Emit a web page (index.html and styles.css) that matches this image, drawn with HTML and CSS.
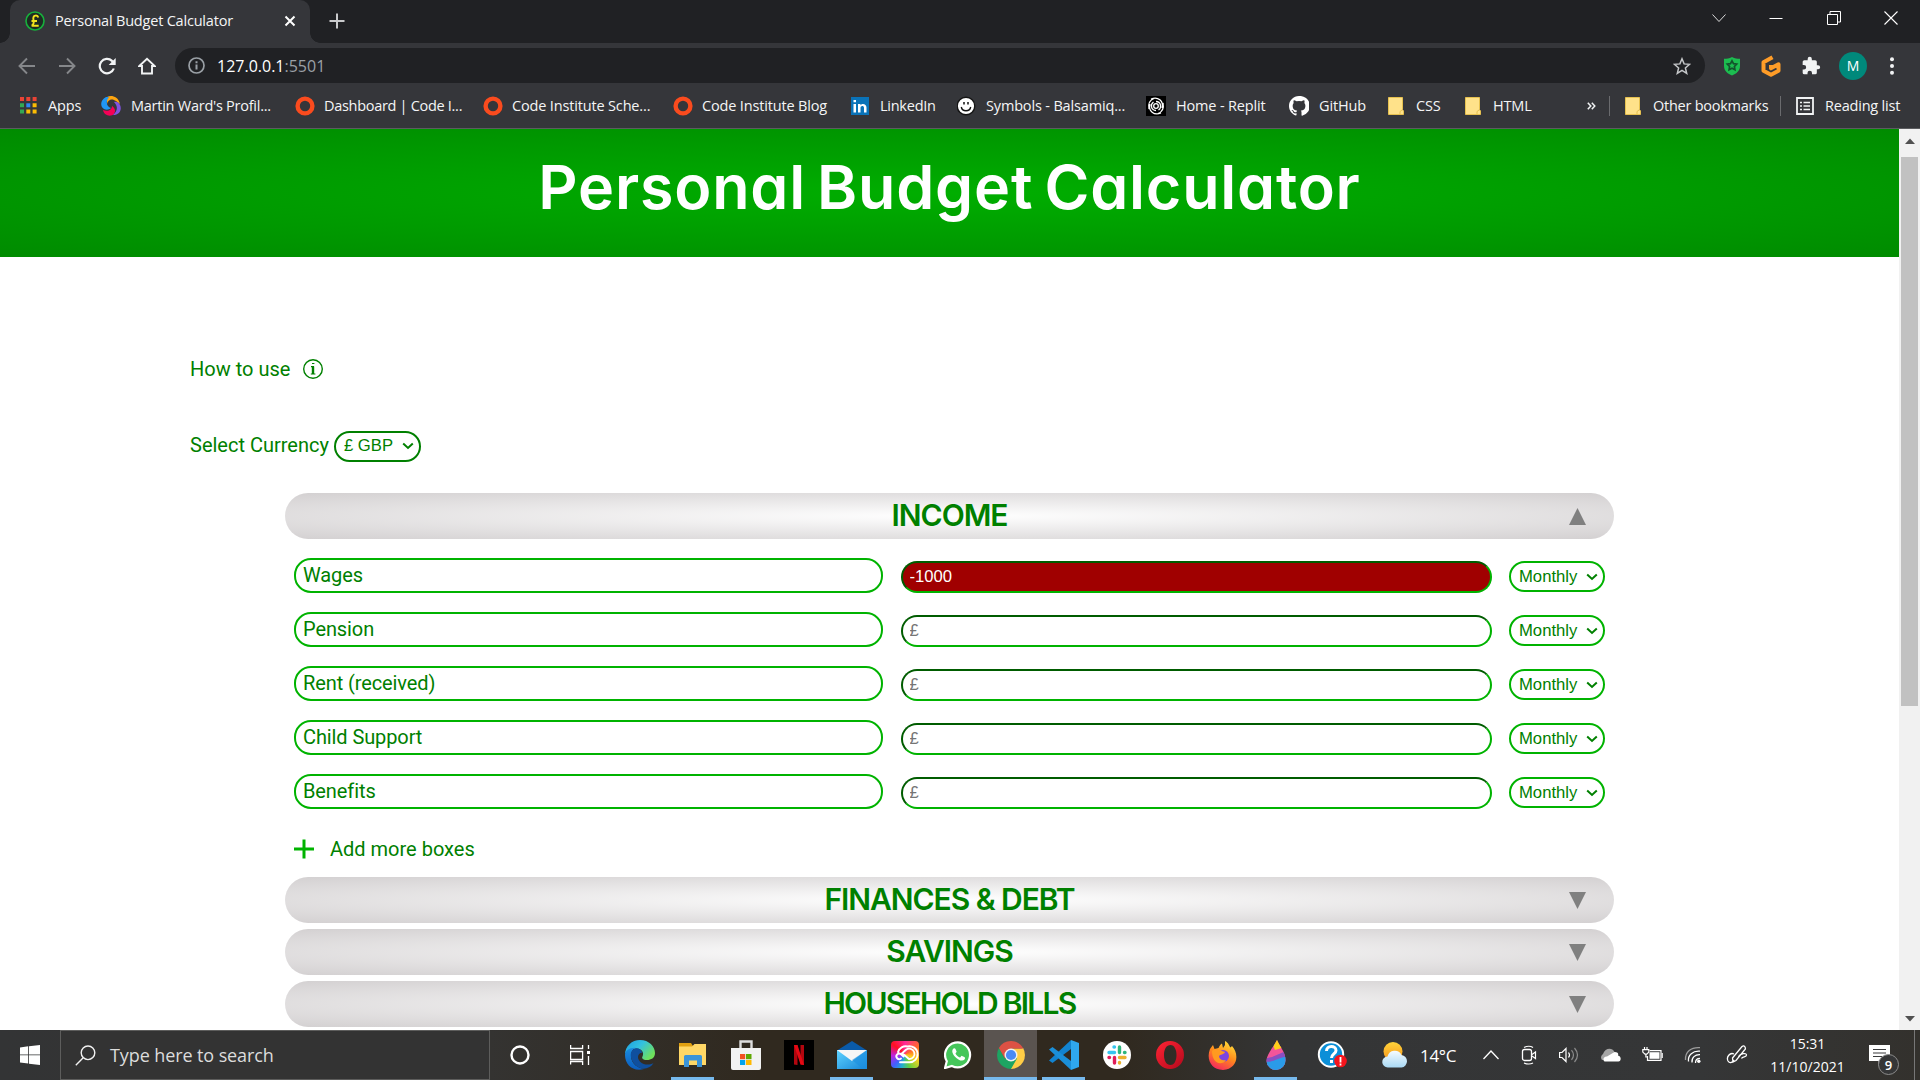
FILE: index.html
```html
<!DOCTYPE html>
<html lang="en">
<head>
<meta charset="utf-8">
<title>Personal Budget Calculator</title>
<link rel="stylesheet" href="styles.css">
</head>
<body>
<svg width="0" height="0" class="defs">
  <defs>
    <symbol id="ring" viewBox="0 0 20 20"><circle cx="10" cy="10" r="7.4" fill="none" stroke="#fa4b1e" stroke-width="4.4"/></symbol>
    <symbol id="folder" viewBox="0 0 16 18"><path d="M.5.5h14v12l1 1.500v3.500H.5z" fill="#ffe28a" stroke="#e6c14f"/><path d="M12 17.500v-3l2-1.500" fill="none" stroke="#e6c14f"/></symbol>
    <symbol id="chev" viewBox="0 0 12 8"><path d="M1.200 1.500 6 6l4.800-4.500" fill="none" stroke="green" stroke-width="2"/></symbol>
    <linearGradient id="edgeA" x1="0" y1="0" x2="1" y2=".6"><stop offset="0" stop-color="#1b9de2"/><stop offset=".5" stop-color="#33c1e0"/><stop offset="1" stop-color="#6fe05a"/></linearGradient>
    <linearGradient id="edgeB" x1="0" y1="0" x2="0" y2="1"><stop offset="0" stop-color="#1a8ce0"/><stop offset="1" stop-color="#0b5cbd"/></linearGradient>
    <linearGradient id="mailG" x1="0" y1="0" x2="1" y2="1"><stop offset="0" stop-color="#5fd3ff"/><stop offset="1" stop-color="#1786d8"/></linearGradient>
    <linearGradient id="ffG" x1=".8" y1="0" x2=".3" y2="1"><stop offset="0" stop-color="#ffe23a"/><stop offset=".5" stop-color="#ff8a1c"/><stop offset="1" stop-color="#f5265e"/></linearGradient>
    <linearGradient id="opG" x1="0" y1="0" x2="1" y2="1"><stop offset="0" stop-color="#ff2434"/><stop offset="1" stop-color="#b3091c"/></linearGradient>
    <linearGradient id="sunG" x1="0" y1="0" x2="0" y2="1"><stop offset="0" stop-color="#ffd43a"/><stop offset="1" stop-color="#f7941d"/></linearGradient>
    <linearGradient id="cloudG" x1="0" y1="0" x2="0" y2="1"><stop offset="0" stop-color="#f5fbff"/><stop offset="1" stop-color="#a9d9f5"/></linearGradient>
    <clipPath id="drop"><path d="M14 0c3 7 8.500 12 8.500 20a9.500 9.500 0 0 1-19 1C3.500 14 10 8 14 0z"/></clipPath>
  </defs>
</svg>

<header class="browser">
  <div class="tabstrip">
    <div class="tab">
      <svg class="favicon" width="20" height="20" viewBox="0 0 20 20"><circle cx="10" cy="10" r="9" fill="#1e2b22" stroke="#17b03c" stroke-width="1.600"/><path d="M13.300 6.600C12.500 3.600 8.300 4 8.300 7.200c0 2 .8 3 .3 5-.2 1.100-.8 2-1.900 2.500h7M6.500 10h5.500" fill="none" stroke="#f2e21c" stroke-width="1.900"/></svg>
      <span class="tab-title">Personal Budget Calculator</span>
      <svg class="tab-close" width="12" height="12" viewBox="0 0 12 12"><path d="m1.500 1.500 9 9m0-9-9 9" stroke="#fff" stroke-width="2"/></svg>
    </div>
    <svg class="newtab" width="16" height="16" viewBox="0 0 16 16"><path d="M8 .5v15M.5 8h15" stroke="#c9cacc" stroke-width="2"/></svg>
    <div class="window-controls">
      <svg width="14" height="14" viewBox="0 0 14 14"><path d="m.5 3.500 6.500 7 6.500-7" fill="none" stroke="#ddd"/></svg>
      <svg width="14" height="14" viewBox="0 0 14 14"><path d="M.5 7.500h13" stroke="#fff"/></svg>
      <svg width="14" height="14" viewBox="0 0 14 14"><path d="M.5 3.500h10v10h-10zM3 3V.5h10.500V11H11" fill="none" stroke="#fff"/></svg>
      <svg width="14" height="14" viewBox="0 0 14 14"><path d="m.5.5 13 13m0-13-13 13" stroke="#fff" stroke-width="1.100"/></svg>
    </div>
  </div>
  <div class="toolbar">
    <div class="nav">
      <svg width="18" height="18" viewBox="0 0 18 18"><path d="M17 9H2M9 1.500 1.500 9 9 16.500" fill="none" stroke="#85878a" stroke-width="1.900"/></svg>
      <svg width="18" height="18" viewBox="0 0 18 18"><path d="M1 9h15M9 1.500 16.500 9 9 16.500" fill="none" stroke="#85878a" stroke-width="1.900"/></svg>
      <svg width="18" height="18" viewBox="0 0 18 18"><path d="M15.800 11.500A7.200 7.200 0 1 1 14 3.900l1.700 1.800" fill="none" stroke="#f1f3f4" stroke-width="2.200"/><path d="M17.700 1v7h-7z" fill="#f1f3f4"/></svg>
      <svg width="18" height="18" viewBox="0 0 18 18"><path d="M1.300 9 9 1.800 16.700 9H14v7.500H4V9z" fill="none" stroke="#f1f3f4" stroke-width="1.900"/></svg>
    </div>
    <div class="omnibox">
      <svg width="17" height="17" viewBox="0 0 17 17"><circle cx="8.500" cy="8.500" r="7.500" fill="none" stroke="#9aa0a6" stroke-width="1.700"/><path d="M8.500 7.500v5M8.500 4.300v1.900" stroke="#9aa0a6" stroke-width="2"/></svg>
      <span class="host">127.0.0.1</span><span class="port">:5501</span>
      <svg class="star" width="18" height="18" viewBox="0 0 18 18"><path d="m9 1.800 2.100 5.100 5.500.4-4.200 3.600 1.300 5.400L9 13.400l-4.700 2.900 1.300-5.400L1.400 7.300l5.500-.4z" fill="none" stroke="#c4c6c8" stroke-width="1.500"/></svg>
    </div>
    <div class="extensions">
      <svg width="18" height="20" viewBox="0 0 18 20"><path d="M9 1c3 1.500 5 1.700 8 1.700V10c0 5-4 8-8 9.500C5 18 1 15 1 10V2.700C4 2.700 6 2.500 9 1z" fill="#1cbd50"/><path d="m9 4.800 1.500 2.900 3.200.5-2.300 2.300.5 3.300L9 12.300l-2.900 1.500.5-3.300-2.300-2.300 3.200-.5z" fill="none" stroke="#13522c" stroke-width="1.700"/></svg>
      <svg width="20" height="22" viewBox="0 0 20 22"><path d="M11.500 2.200 2.500 7.300v8.400l7.500 4.100 7.500-4.100V9.300L10 13.300V10" fill="none" stroke="#ff9d28" stroke-width="4" stroke-linejoin="round"/></svg>
      <svg width="20" height="20" viewBox="0 0 24 24"><path d="M20.500 11H19V7a2 2 0 0 0-2-2h-4V3.500a2.500 2.500 0 0 0-5 0V5H4a2 2 0 0 0-2 2v3.800h1.500a2.700 2.700 0 0 1 0 5.400H2V20a2 2 0 0 0 2 2h3.800v-1.500a2.700 2.700 0 0 1 5.400 0V22H17a2 2 0 0 0 2-2v-4h1.500a2.500 2.500 0 0 0 0-5z" fill="#f1f3f4"/></svg>
      <span class="avatar">M</span>
      <svg width="6" height="18" viewBox="0 0 6 18"><circle cx="3" cy="2.300" r="2" fill="#f1f3f4"/><circle cx="3" cy="9" r="2" fill="#f1f3f4"/><circle cx="3" cy="15.700" r="2" fill="#f1f3f4"/></svg>
    </div>
  </div>
  <div class="bookmarks">
    <div class="bm w81"><svg width="17" height="17" viewBox="0 0 17 17"><path d="M0 0h4v4H0zM6.300 0h4v4h-4zM12.600 0h4v4h-4z" fill="#ea4335"/><path d="M0 6.300h4v4H0zM0 12.600h4v4H0z" fill="#34a853"/><path d="M6.300 6.300h4v4h-4z" fill="#2f86f5"/><path d="M12.600 6.300h4v4h-4zM6.300 12.600h4v4h-4zM12.600 12.600h4v4h-4z" fill="#fbbc04"/></svg><span>Apps</span></div>
    <div class="bm w194"><svg width="20" height="20" viewBox="0 0 20 20"><path d="M6 11C5 5 10 1 15 5l4 3C17 0 10-1 6 1z" fill="#fda50f"/><path d="M5 1C-1 4-1 11 3 13c2 1 5 1 7-1C6 11 4 6 8 1z" fill="#2196f3"/><path d="M2 14c1 6 8 7 11 4 2-3 1-6-2-8 0 4-4 6-9 4z" fill="#f50057"/><path d="M13 6c4 4 4 9-1 13 7 0 9-6 7-10-1-3-4-4-6-3z" fill="#8053e0"/></svg><span>Martin Ward's Profil...</span></div>
    <div class="bm w188"><svg width="20" height="20"><use href="#ring"/></svg><span>Dashboard | Code I...</span></div>
    <div class="bm w190"><svg width="20" height="20"><use href="#ring"/></svg><span>Code Institute Sche...</span></div>
    <div class="bm w178"><svg width="20" height="20"><use href="#ring"/></svg><span>Code Institute Blog</span></div>
    <div class="bm w106"><svg width="18" height="18" viewBox="0 0 18 18"><path d="M0 0h18v18H0z" fill="#0a73b8"/><path d="M2.500 7H5v8.500H2.500zM2.500 3H5v2.300H2.500zM7 7h2.500v1.200C11 6 15.500 6.500 15.500 10.500v5H13v-4.600c0-2.700-3.500-2.500-3.500 0v4.600H7z" fill="#fff"/></svg><span>LinkedIn</span></div>
    <div class="bm w189"><svg width="20" height="20" viewBox="0 0 20 20"><circle cx="9" cy="10" r="8.800" fill="#fff" stroke="#151515" stroke-width="1.400"/><path d="M4.300 11c1 5 8.400 5 9.400 0" fill="none" stroke="#111" stroke-width="1.400"/><path d="M7 6v2.500M11 6v2.500" stroke="#111" stroke-width="1.500"/></svg><span>Symbols - Balsamiq...</span></div>
    <div class="bm wide w143"><svg width="20" height="20" viewBox="0 0 20 20"><path d="M0 0h20v20H0z" fill="#000"/><circle cx="10" cy="10" r="2.300" fill="none" stroke="#fff" stroke-width="1.300"/><path d="M10 5.500c5 0 6 6 2.500 8.500M10 14.500c-5 0-6-6-2.500-8.500M5 3c7-3 13 2 11 9M15 17C8 20 2 15 4 8M17 7c1 5-1 9-5 10.500M3 13c-1-5 1-9 5-10.500" fill="none" stroke="#fff" stroke-width="1.300"/></svg><span>Home - Replit</span></div>
    <div class="bm wide w99"><svg width="20" height="20" viewBox="0 0 16 16"><path fill="#fff" d="M8 0C3.580 0 0 3.580 0 8c0 3.540 2.290 6.530 5.470 7.590.4.070.55-.17.55-.38v-1.340C3.800 14.350 3.330 12.930 3.330 12.930c-.36-.92-.89-1.170-.89-1.170-.73-.5.050-.49.050-.49.800.06 1.230.83 1.230.83.720 1.220 1.880.87 2.330.66.070-.52.280-.87.510-1.070-1.780-.2-3.640-.89-3.640-3.950 0-.87.310-1.590.820-2.150-.08-.2-.36-1.020.080-2.120 0 0 .67-.21 2.200.820a7.600 7.600 0 0 1 4 0c1.530-1.040 2.200-.82 2.200-.82.440 1.100.160 1.920.080 2.120.510.560.820 1.270.820 2.150 0 3.070-1.870 3.750-3.650 3.950.290.250.540.730.540 1.480v2.200c0 .21.150.46.550.38A8 8 0 0 0 8 0z"/></svg><span>GitHub</span></div>
    <div class="bm w77"><svg width="16" height="18"><use href="#folder"/></svg><span>CSS</span></div>
    <div class="bm w122"><svg width="16" height="18"><use href="#folder"/></svg><span>HTML</span></div>
    <svg class="more" width="9" height="8" viewBox="0 0 9 8"><path d="m.8.8 3 3.200-3 3.200M4.800.8l3 3.200-3 3.200" fill="none" stroke="#f1f3f4" stroke-width="1.500"/></svg>
    <i class="sep"></i>
    <div class="bm w155"><svg width="16" height="18"><use href="#folder"/></svg><span>Other bookmarks</span></div>
    <i class="sep"></i>
    <div class="bm last"><svg width="18" height="18" viewBox="0 0 18 18"><path d="M1 1h16v16H1z" fill="none" stroke="#f1f3f4" stroke-width="1.800"/><path d="M4 5.500h2M7.500 5.500H14M4 9h2M7.500 9H14M4 12.500h2M7.500 12.500H14" stroke="#f1f3f4" stroke-width="1.700"/></svg><span>Reading list</span></div>
  </div>
</header>

<div class="viewport">
  <main class="page">
    <div class="banner"><h1>Personal Budget Calculator</h1></div>
    <div class="intro">
      <p class="howto">How to use
        <svg width="22" height="22" viewBox="0 0 22 22"><circle cx="11" cy="11" r="9.300" fill="none" stroke="green" stroke-width="1.400"/><path d="M11 8.500v7.500" stroke="green" stroke-width="2.400"/><path d="M9 8.700h3M8.800 16h4.600M10 5.500h2.400" stroke="green" stroke-width="1.200"/></svg>
      </p>
      <p class="currency"><span class="lift">Select Currency</span>
        <span class="select dark">£ GBP<svg width="12" height="8"><use href="#chev"/></svg></span>
      </p>
    </div>
    <section class="accordion">
      <h2 class="bar">INCOME<span class="arrow up"></span></h2>
      <div class="rows">
        <div class="row"><label>Wages</label><input class="negative" value="-1000"><span class="select">Monthly<svg width="12" height="8"><use href="#chev"/></svg></span></div>
        <div class="row"><label>Pension</label><input placeholder="£"><span class="select">Monthly<svg width="12" height="8"><use href="#chev"/></svg></span></div>
        <div class="row"><label>Rent (received)</label><input placeholder="£"><span class="select">Monthly<svg width="12" height="8"><use href="#chev"/></svg></span></div>
        <div class="row"><label>Child Support</label><input placeholder="£"><span class="select">Monthly<svg width="12" height="8"><use href="#chev"/></svg></span></div>
        <div class="row"><label>Benefits</label><input placeholder="£"><span class="select">Monthly<svg width="12" height="8"><use href="#chev"/></svg></span></div>
      </div>
      <div class="add"><svg width="20" height="20" viewBox="0 0 20 20"><path d="M10 .5v19M0 10h20" stroke="#00b300" stroke-width="3"/></svg>Add more boxes</div>
      <h2 class="bar">FINANCES &amp; DEBT<span class="arrow down"></span></h2>
      <h2 class="bar">SAVINGS<span class="arrow down"></span></h2>
      <h2 class="bar tight">HOUSEHOLD BILLS<span class="arrow down"></span></h2>
    </section>
  </main>
  <div class="scrollbar">
    <svg width="10" height="6" viewBox="0 0 10 6"><path d="M0 6 5 .5 10 6z" fill="#505050"/></svg>
    <div class="thumb"></div>
    <svg class="end" width="10" height="6" viewBox="0 0 10 6"><path d="m0 0 5 5.500L10 0z" fill="#505050"/></svg>
  </div>
</div>

<footer class="taskbar">
  <div class="start"><svg width="20" height="20" viewBox="0 0 20 20"><path d="m0 2.500 8.200-1.200v8.200H0zM9 1.200 20 0v9.500H9zM0 10.300h8.200v8.300L0 17.500zM9 10.300h11V20L9 18.700z" fill="#fff"/></svg></div>
  <div class="search">
    <svg width="21" height="21" viewBox="0 0 21 21"><circle cx="13" cy="7.800" r="6.800" fill="none" stroke="#f2f2f2" stroke-width="1.400"/><path d="M8.200 12.800.8 20.200" stroke="#f2f2f2" stroke-width="1.400"/></svg>
    Type here to search
  </div>
  <div class="cell cortana"><svg width="20" height="20" viewBox="0 0 20 20"><circle cx="10" cy="10" r="8.500" fill="none" stroke="#fff" stroke-width="2.400"/></svg></div>
  <div class="cell taskview"><svg width="20" height="20" viewBox="0 0 20 20"><path d="M.6 0v3.500h12V0M.6 6.500h12v8H.6zM.6 19.500V16.500h12v3.500M18.500 0v4M18.500 11v9" fill="none" stroke="#fff" stroke-width="1.300"/><path d="M17 6h3v3h-3z" fill="#fff"/></svg></div>
  <div class="apps">
    <div class="app"><svg width="30" height="30" viewBox="0 0 30 30"><path d="M15 0c9 0 15 6.500 15 13 0 5-4 7-8 7-4.500 0-5.500-2-4.500-3.500 2-4-1-8-6-8C5 8.500 0 12 0 15 0 6 7 0 15 0z" fill="url(#edgeA)"/><path d="M0 15c0-5 6-8 11-7-4 1-5 5-5 8 0 8 7 12 13 13C8 32 0 25 0 15z" fill="url(#edgeB)"/><path d="M11 8.300c-4 1-6 5-5 9 2 9 11 14 18 10 2-1 3.500-2.500 4.500-4C20 27 13 22 13 17c0-3 3-5 4.500-4-1-3-3.500-5-6.500-4.700z" fill="#0f4f9e"/></svg></div>
    <div class="app run"><svg width="28" height="24" viewBox="0 0 28 24"><path d="M0 0h12l2 3v5H0z" fill="#e0a011"/><path d="M0 3.500h13L15.500 1H27v21H0z" fill="#ffd766"/><path d="M5 24V13.500q0-1.500 1.500-1.500h15q1.500 0 1.500 1.500V24h-5v-6.500h-8V24z" fill="#3b94d9"/></svg></div>
    <div class="app"><svg width="30" height="30" viewBox="0 0 30 30"><path d="M9.500 10V1.500h11V10" fill="none" stroke="#dedede" stroke-width="2.400"/><path d="M0 8h30v20q0 2-2 2H2q-2 0-2-2z" fill="#f2f2f2"/><path d="M9 14h5.200v5.200H9z" fill="#f25022"/><path d="M15 14h5.500v5.200H15z" fill="#5fa802"/><path d="M9 20h5.200v5H9z" fill="#00a4ef"/><path d="M15 20h5.500v5H15z" fill="#ffb900"/></svg></div>
    <div class="app"><svg width="30" height="30" viewBox="0 0 30 30"><path d="M0 0h30v30H0z" fill="#000"/><path d="M10 5h3.500v20L10 24.500zM16.500 5H20v20l-3.500-.5z" fill="#b1060f"/><path d="M10 5h3.500L20 25l-3.500-.5z" fill="#e50914"/></svg></div>
    <div class="app run"><svg width="30" height="28" viewBox="0 0 30 28"><path d="M0 9.500 15 0l15 9.500z" fill="#0a5aa8"/><path d="M0 9h30v19H0z" fill="url(#mailG)"/><path d="M0 9h30L15 20z" fill="#f6f6f6"/><path d="m15 19 15-10v19H26z" fill="#1c8fe0" opacity=".6"/></svg></div>
    <div class="app lifted"><svg class="cc" width="28" height="27" viewBox="0 0 28 27"><path d="m12.500 15.500-2.500-2.300a2.800 2.800 0 1 0 0 4.300M10 13.200l5-4.400a5.200 5.200 0 1 1 3 9.200l-5.500-4.700M7 11a8 8 0 0 1 9.500-5.500 8 8 0 1 1 1.500 15.700H9" fill="none" stroke="#fff" stroke-width="1.900" stroke-linecap="round"/></svg></div>
    <div class="app"><svg width="28" height="28" viewBox="0 0 28 28"><path d="M1 27 2.800 20.200A12.500 12.500 0 1 1 7.900 25z" fill="#45c65a" stroke="#fff" stroke-width="2.200"/><path d="M9.500 7.500c-2 1.500-1.500 5 1.500 8.200 3 3.300 7.500 5.300 9.500 2.800 1-1.500.6-2-.2-2.500l-2.300-1.100c-.8-.3-1.300 1.600-2 1.600-1.500-.3-4-2.500-4.500-4 0-.6 1.400-1.200 1.100-2L11.500 8q-.6-1.200-2-.5z" fill="#fff"/></svg></div>
    <div class="app run active"><svg width="28" height="28" viewBox="0 0 28 28"><path d="M14 14 26.100 7A14 14 0 0 1 14 28z" fill="#ffcd46"/><path d="M14 7.500H26.300L14 28l6-10z" fill="#ffcd46"/><path d="M14 28A14 14 0 0 1 1.900 7l6 10.500L14 14l6 3.500z" fill="#1da462"/><path d="M7.900 17.500 1.900 7A14 14 0 0 1 26.300 7.500H14z" fill="#dd5144"/><circle cx="14" cy="14" r="6.500" fill="#f1f1f1"/><circle cx="14" cy="14" r="5.100" fill="#4a8af4"/></svg></div>
    <div class="app run"><svg width="30" height="30" viewBox="0 0 30 30"><path d="M22 0v9L3.500 23 0 20.500z" fill="#1283cf"/><path d="M0 9.500 3.500 7 22 21v9z" fill="#1b8fd8"/><path d="M22 0l8 3v24l-8 3z" fill="#2fa7ee"/></svg></div>
    <div class="app"><svg width="28" height="28" viewBox="0 0 28 28"><circle cx="14" cy="14" r="14" fill="#fff"/><g stroke-width="3.400" stroke-linecap="round"><path d="M11.500 6h-.5M6 11.500h5.500" stroke="#36c5f0"/><path d="M16.500 6v5.500M22 11.500h-.5" stroke="#2eb67d"/><path d="M16.500 16.500H22M16.500 21.500v.5" stroke="#ecb22e"/><path d="M11.500 16.500V22M6 16.500h.5" stroke="#e01e5a"/></g></svg></div>
    <div class="app"><svg width="28" height="28" viewBox="0 0 28 28"><path fill-rule="evenodd" d="M14 0a14 14 0 1 0 0 28 14 14 0 1 0 0-28zM14.500 4c4 0 6 5 6 10s-2 10-6 10-6.500-4-6.500-10S10.500 4 14.500 4z" fill="url(#opG)"/></svg></div>
    <div class="app"><svg width="29" height="29" viewBox="0 0 29 29"><path d="M2 8 5 4l1.500 4 4-1C12 4 13 3 14 2.500l1 4.500 2-3V0c4 2 4 5 5.500 6.500L24 5c8 9 5 23-9 24C3 29-2 18 2 8z" fill="url(#ffG)"/><circle cx="15" cy="15" r="6" fill="#7b45e0"/><path d="M4 10c3-3 7-2 10 0l3 1c-1 3-5 2-6 4 0 3 3 5 7 4-4 6-14 4-14-9z" fill="#ff9a20"/></svg></div>
    <div class="app run"><svg width="26" height="30" viewBox="0 0 26 30"><g clip-path="url(#drop)"><path d="M0 0h26v30H0z" fill="#f2559a"/><path d="M8 0h14v7L12 10z" fill="#ffcf1a"/><path d="M0 19 9 17l14-6v8L10 25H0z" fill="#8a4fc0"/><path d="M0 21c8 3 14-3 25-5v14H0z" fill="#2a9be8"/></g></svg></div>
  </div>
  <div class="cell help"><svg width="30" height="28" viewBox="0 0 30 28"><circle cx="14" cy="13.500" r="12.200" fill="#0b8fd8" stroke="#fff" stroke-width="2"/><path d="M9.500 10c0-6 9.500-6 9.500-.5 0 3.500-4.500 3.500-4.500 7.500M14.500 19v3" fill="none" stroke="#fff" stroke-width="3"/><circle cx="23.500" cy="20" r="6.300" fill="#f5141c"/><path d="M23.500 16v5.500M23.500 22.500V24.500" stroke="#fff" stroke-width="1.800"/></svg></div>
  <div class="weather"><svg width="26" height="26" viewBox="0 0 26 26"><circle cx="11" cy="9.500" r="9.500" fill="url(#sunG)"/><path d="M6 25.500a5.500 5.500 0 0 1-.5-11 7.500 7.500 0 0 1 14-1.500 6.300 6.300 0 0 1 0 12.500z" fill="url(#cloudG)"/></svg><span>14°C</span></div>
  <div class="tray">
    <svg width="18" height="18" viewBox="0 0 18 18"><path d="m1.500 13 7.500-8 7.500 8" fill="none" stroke="#fff" stroke-width="1.300"/></svg>
    <svg width="18" height="20" viewBox="0 0 18 20"><rect x="2.500" y="4.500" width="9" height="11" rx="2" fill="none" stroke="#fff" stroke-width="1.300"/><path d="M12 9.500l3.500-2.500v6.500L12 11M4 2.500q5-2.500 9 0M4 18q5 2 9 0" fill="none" stroke="#fff" stroke-width="1.200"/></svg>
    <svg width="22" height="18" viewBox="0 0 22 18"><path d="M1.600 6.500H4L8 2.500v13l-4-4H1.600z" fill="none" stroke="#fff" stroke-width="1.200"/><path d="M10.500 6.500q2 2.500 0 5" fill="none" stroke="#fff" stroke-width="1.200"/><path d="M13.500 4.200q4 4.800 0 9.600M16.500 2q6 7 0 14" fill="none" stroke="#8b8b8b" stroke-width="1.200"/></svg>
    <svg width="21" height="14" viewBox="0 0 21 14"><path d="M2 12a4 4 0 0 1 1-6C5 0 12-1 14.500 4L9 11z" fill="#a5a5a5"/><path d="M4.500 13.500C2 12 4 8 7 8.500L14.500 4c4 0 4 2.500 3.500 3.500 4 1 3 6 .5 6z" fill="#fff"/></svg>
    <svg width="22" height="16" viewBox="0 0 22 16"><path d="M7.500 3.600h11.500v9.800H5.500V9" fill="none" stroke="#fff" stroke-width="1.200"/><path d="M7.500 5.200h10v6.600h-10z" fill="#fff"/><path d="M2.500 0v2.500M5 0v2.500M.8 2.600h6v2.500L4.800 7.200H3L.8 5.100zM3.900 7.200V10h1.800M20.200 6v5" fill="none" stroke="#fff" stroke-width="1.200"/></svg>
    <svg width="22" height="18" viewBox="0 0 22 18"><g fill="none" stroke="#9d9d9d" stroke-width="1.300"><path d="M1.500 14C1 6 7 1 16 1.700"/><path d="M4.500 15.500C3.500 9 9 4.500 16 5.200" stroke="#fff"/><path d="M8 16.500c-.5-5 3-8 8-7.800" stroke="#fff"/><path d="M11.500 17c0-3 1.500-4.600 4.500-4.600" stroke="#fff"/></g><circle cx="14.800" cy="15.300" r="1.700" fill="#fff"/></svg>
    <svg width="22" height="20" viewBox="0 0 22 20"><path d="M7 17 6.500 13 16 1.500q2-1.500 3 .5t-.5 3L10 15.500zM8 9c-4-2-8 3-6 7 2 3 5 1 6-1M12.500 11.500c2-3 8-4 8-1.500s-4 1-5 3.500" fill="none" stroke="#fff" stroke-width="1.300"/></svg>
  </div>
  <div class="clock"><span>15:31</span><span>11/10/2021</span></div>
  <div class="notify">
    <svg width="21" height="21" viewBox="0 0 21 21"><path d="M0 0h21v16h-7l-4.500 4.500V16H0z" fill="#fff"/><path d="M4 4.500h13M4 8h13M4 11.500h9" stroke="#3a3b3c" stroke-width="1.200"/></svg>
    <span class="count">9</span>
  </div>
</footer>
</body>
</html>
```
FILE: styles.css
```css
* { box-sizing: border-box; }
body {
  margin: 0;
  width: 1920px;
  height: 1080px;
  overflow: hidden;
  display: flex;
  flex-direction: column;
  font-family: "Open Sans", sans-serif;
  background: #fff;
}
svg { display: block; flex: none; }
.defs { position: absolute; }
h1, h2, p { margin: 0; }

/* Browser window */
.browser { height: 129px; background: #35363a; border-bottom: 1px solid #5c5d60; color: #f4f5f6; flex: none; }
.tabstrip { height: 43px; background: #202124; display: flex; align-items: flex-start; padding-left: 10px; }
.tab {
  width: 300px; height: 43px; background: #35363a; border-radius: 10px 10px 0 0;
  display: flex; align-items: center; padding: 0 14px 1px 15px; position: relative;
}
.tab::before, .tab::after {
  content: ""; position: absolute; bottom: 0; width: 10px; height: 10px;
}
.tab::before { left: -10px; background: radial-gradient(circle at 0 0, transparent 9.500px, #35363a 10px); }
.tab::after { right: -10px; background: radial-gradient(circle at 100% 0, transparent 9.500px, #35363a 10px); }
.tab-title { font-size: 14.500px; letter-spacing: -.2px; margin-left: 10px; padding-bottom: 2px; white-space: nowrap; }
.tab-close { margin-left: auto; }
.newtab { margin: 13px 0 0 19px; }
.window-controls { margin-left: auto; display: flex; gap: 43.300px; padding: 11px 22px 0 0; }

.toolbar { height: 45px; display: flex; align-items: center; padding: 0 9px 0 7px; }
.nav { display: flex; width: 168px; }
.nav svg { margin: 0 11px; }
.omnibox {
  width: 1530px; height: 35px; border-radius: 18px; background: #202124;
  display: flex; align-items: center; padding: 0 14px 0 13px; font-size: 16px;
}
.host { margin-left: 12px; color: #fff; }
.port { color: #9aa0a6; }
.star { margin-left: auto; }
.extensions { display: flex; align-items: center; flex: 1; justify-content: space-between; padding: 0 16px 0 18px; }
.avatar {
  width: 28px; height: 28px; border-radius: 50%; background: #00897b; color: #fff; margin: 0 2px 0 -2px;
  font-size: 14px; display: grid; place-items: center;
}

.bookmarks { height: 36px; display: flex; align-items: center; padding-left: 20px; font-size: 14.500px; letter-spacing: -.16px; }
.bm { display: grid; grid-template-columns: 29px auto; justify-content: start; align-items: center; white-space: nowrap; flex: none; }
.bm span { padding-bottom: 2px; }
.bm svg { margin-bottom: 1px; }
.wide { grid-template-columns: 30px auto; }
.w81 { width: 81px; grid-template-columns: 28px auto; }
.w194 { width: 194px; grid-template-columns: 30px auto; letter-spacing: -.25px; }
.w188 { width: 188px; letter-spacing: -.3px; }
.w190 { width: 190px; }
.w178 { width: 178px; }
.w106 { width: 106px; letter-spacing: -.25px; }
.w189 { width: 189px; }
.w143 { width: 143px; }
.w99 { width: 99px; }
.w77 { width: 77px; grid-template-columns: 28px auto; }
.w122 { width: 122px; grid-template-columns: 28px auto; }
.w155 { width: 155px; grid-template-columns: 28px auto; letter-spacing: -.25px; }
.last { letter-spacing: -.2px; }
.sep { width: 1px; height: 20px; background: #6a6b6e; margin-right: 15px; flex: none; }
.more { margin-right: 13px; }

/* Page */
.viewport { flex: 1; display: flex; min-height: 0; }
.page { width: 1899px; overflow: hidden; color: green; font-family: Roboto, sans-serif; font-size: 20px; }
.banner { height: 128px; background: radial-gradient(#00ae00, #008b00); display: grid; justify-content: center; }
.banner h1 {
  font: 600 61px/72px Inter, sans-serif; font-feature-settings: "cv11"; color: #fff;
  letter-spacing: .8px; word-spacing: -5px; padding-top: 22px;
}
.intro { padding: 98px 0 0 190px; }
.howto, .currency { display: flex; align-items: center; }
.howto { height: 28px; gap: 12px; }
.currency { height: 32px; margin-top: 47px; gap: 5px; }
.lift { padding-bottom: 2px; }
.select {
  height: 31px; border: 2px solid #00b300; border-radius: 16px; padding: 0 5px 0 8px;
  display: flex; align-items: center; justify-content: space-between;
  font: 16.670px "Liberation Sans", sans-serif; color: green; background: #fff;
}
.dark { width: 87px; border-color: green; }

.accordion { width: 1329px; margin: 31px 0 0 285px; display: flex; flex-direction: column; gap: 6px; }
.bar {
  height: 46px; flex: none; border-radius: 23px; background: radial-gradient(#fff, #d3d0d1);
  display: flex; align-items: center; justify-content: center; position: relative;
  font: 600 30px Inter, sans-serif; letter-spacing: -1.050px; padding-bottom: 2px;
}
.tight { letter-spacing: -1.750px; }
.arrow { position: absolute; right: 28px; top: 15px; width: 17px; height: 17px; background: gray; }
.up { clip-path: polygon(50% 0, 100% 100%, 0 100%); }
.down { clip-path: polygon(0 0, 100% 0, 50% 100%); }
.rows { padding: 13px 9px 0; display: flex; flex-direction: column; gap: 20px; }
.row { display: grid; grid-template-columns: 589px 591px 96px; column-gap: 17.500px; height: 34px; }
.row label { border: 2px solid #00b300; border-radius: 17px; padding-left: 7px; line-height: 30px; letter-spacing: -.1px; }
.row input {
  height: 32px; margin: 3px 0 0; border: 2px solid; border-color: #005c00 #00b300 #00b300 #005c00;
  border-radius: 16px; padding: 0 7px; font: 16.670px "Liberation Sans", sans-serif; width: 100%; outline: none;
}
.row input::placeholder { color: #757575; }
.row .negative { background: #a00000; color: #fff; }
.row .select { margin-top: 3px; }
.add { display: flex; align-items: center; gap: 16px; height: 28px; padding-left: 9px; margin: 21px 0 8px; }

.scrollbar { width: 21px; background: #f1f1f1; display: flex; flex-direction: column; align-items: center; padding-top: 9px; }
.thumb { width: 17px; height: 549px; background: #c1c1c1; margin-top: 13px; }
.end { margin: auto 0 8px; }

/* Taskbar */
.taskbar { height: 50px; flex: none; display: flex; background: linear-gradient(90deg, #333435 0, #343331 490px, #30291f 760px, #30291f 1120px, #343536 1290px, #353637 1700px, #33312d 1920px); color: #fff; }
.start { width: 60px; display: grid; place-items: center; }
.search {
  width: 430px; background: #333; border: 1px solid #5d5d5c; display: flex; align-items: center;
  gap: 14px; padding-left: 14px; font-size: 18px; letter-spacing: -.1px; color: #dcdcdc;
}
.cell { display: grid; place-items: center; }
.cortana { width: 60px; }
.taskview { width: 60px; margin-right: 3px; }
.apps { display: flex; width: 689px; }
.app { width: 53px; display: grid; place-items: center; position: relative; }
.lifted { padding-bottom: 2px; }
.cc {
  border-radius: 4px;
  background: conic-gradient(#ff2a9a, #ff6a2a 60deg, #ffd020 110deg, #5fd040 160deg, #20b0d0 195deg, #4060ff 225deg, #c020e0 265deg, #ff1020 310deg, #ff2a9a);
}
.run::after { content: ""; position: absolute; left: 5px; right: 5px; bottom: 0; height: 3px; background: #76b9ed; }
.active { background: #5a5450; }
.active::after { left: 0; right: 0; }
.help { width: 59px; }
.weather { width: 111px; display: flex; align-items: center; gap: 12px; padding-left: 21px; font-size: 17px; letter-spacing: -.3px; white-space: nowrap; }
.tray { width: 288px; display: flex; align-items: center; justify-content: space-between; padding: 0 12px 0 10px; }
.clock { width: 95px; display: flex; flex-direction: column; align-items: center; justify-content: center; font-size: 14px; line-height: 23px; padding-bottom: 1px; }
.notify { width: 60px; border-right: 1px solid #777; padding: 15px 0 0 14px; position: relative; }
.count {
  position: absolute; left: 23px; top: 24px; width: 21px; height: 21px; border-radius: 50%;
  border: 1px solid #8c8c8c; background: #353637; font-size: 13px; font-weight: 600; display: grid; place-items: center;
}
```
